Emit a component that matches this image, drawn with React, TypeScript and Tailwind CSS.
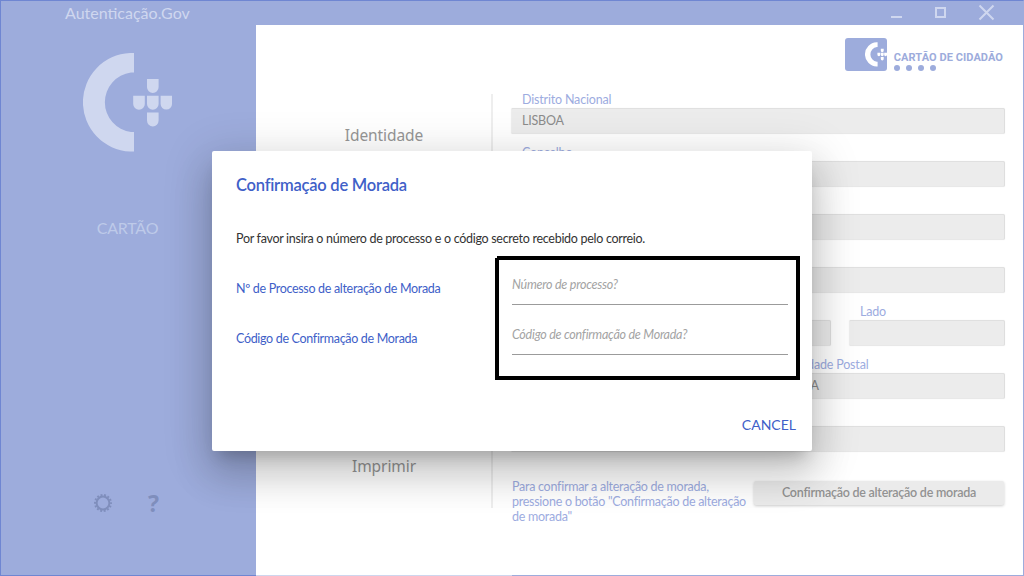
import type { ReactNode } from "react";

function CardMark({ className }: { className?: string }) {
  return (
    <svg viewBox="0 0 89 99" className={className} fill="currentColor" aria-hidden="true">
      <path d="M51 0V19.5H48A30 30 0 0 0 48 79H51V98.5H47A49.3 49.3 0 0 1 47 0Z" />
      <path d="M64 26h11.600v8.200a5.800 5.800 0 0 1-11.600 0z" />
      <path d="M50.200 42.700h11.600v8.200a5.800 5.800 0 0 1-11.600 0z" />
      <path d="M64 42.700h11.600v8.200a5.800 5.800 0 0 1-11.600 0z" />
      <path d="M77.600 42.700h11.400v8.200a5.700 5.700 0 0 1-11.400 0z" />
      <path d="M64 59.400h11.600v8.200a5.800 5.800 0 0 1-11.600 0z" />
    </svg>
  );
}

function GearIcon() {
  return (
    <svg viewBox="0 0 18 18" className="size-[18px]" fill="none" stroke="currentColor" aria-hidden="true">
      <circle cx="9" cy="9" r="6.400" strokeWidth="2" />
      <circle cx="9" cy="9" r="8" strokeWidth="2" strokeDasharray="1.900 1.690" strokeDashoffset="0.950" />
    </svg>
  );
}

function TitleBar() {
  return (
    <header className="flex h-6 shrink-0 items-center justify-between bg-[#9dacdc] pr-7 pl-16 text-[#cfd7ef]">
      <span className="text-[16px] leading-6">Autenticação.Gov</span>
      <svg width="106" height="24" viewBox="0 0 106 24" fill="none" stroke="currentColor" aria-hidden="true">
        <path d="M2 16h11" strokeWidth="2" />
        <rect x="47" y="7" width="9" height="9" strokeWidth="2" />
        <path d="M90.500 4.500l14 14M104.500 4.500l-14 14" strokeWidth="2" />
      </svg>
    </header>
  );
}

function Sidebar() {
  return (
    <aside className="flex w-[255px] shrink-0 flex-col items-center bg-[#9dacdc]">
      <CardMark className="mt-7 mr-[2px] h-[99px] w-[89px] text-[#cfd7ef]" />
      <span className="mt-[66px] mr-[2px] text-base leading-5 tracking-[-0.2px] text-[#becae9]">CARTÃO</span>
      <div className="mt-auto mb-[62px] flex w-full items-center gap-[36px] pl-[93px] text-[#7f8ebc]">
        <GearIcon />
        <span className="font-['Noto_Sans',sans-serif] text-[23px] leading-[20px] font-bold">?</span>
      </div>
    </aside>
  );
}

function Field({ label, value, className = "" }: { label: string; value?: string; className?: string }) {
  return (
    <div className={className}>
      <div className="h-[17px] pl-[11px] text-[12.5px] leading-[17px] tracking-[-0.18px] text-[#9dacdf]">{label}</div>
      <div className="h-[26px] rounded-[2px] border border-t-[#e0e0e0] border-r-[#dedede] border-b-[#e8e8e8] border-l-[#eeeeee] bg-[#ececec] pl-[10px] text-[12.5px] leading-6 tracking-[-0.2px] text-[#8b8b8b] shadow-[0_0_1px_rgba(0,0,0,0.1)]">
        {value}
      </div>
    </div>
  );
}

function BrandHeader() {
  return (
    <div className="flex h-[46px] items-start gap-[7px] self-end pt-[13px] pr-5 text-[#9dacdc]">
      <div className="flex h-[33px] w-[42px] justify-end rounded-[3px] bg-[#9dacdc] pt-1 text-white">
        <CardMark className="h-[25px] w-[22px]" />
      </div>
      <div className="pt-[13px] font-[Roboto,sans-serif] text-[11px] leading-[13px] font-bold tracking-[0.07px] whitespace-nowrap">
        CARTÃO DE CIDADÃO
        <div className="mt-px flex gap-[6px]">
          <i className="size-[6px] rounded-full bg-current" />
          <i className="size-[6px] rounded-full bg-current" />
          <i className="size-[6px] rounded-full bg-current" />
          <i className="size-[6px] rounded-full bg-current" />
        </div>
      </div>
    </div>
  );
}

function MenuItem({ children }: { children: ReactNode }) {
  return (
    <span className="text-center font-['Noto_Sans',sans-serif] text-[15.5px] leading-5 tracking-[-0.08px] text-[#969696]">
      {children}
    </span>
  );
}

function AddressForm() {
  return (
    <section className="flex w-[494px] flex-col">
      <div className="flex flex-col gap-[10px]">
        <Field label="Distrito Nacional" value="LISBOA" />
        <Field label="Concelho" />
        <Field label="Freguesia" />
        <Field label="Localidade" />
        <div className="flex justify-between">
          <Field label="Andar" className="w-[320px]" />
          <Field label="Lado" className="w-[156px]" />
        </div>
        <div className="flex justify-between">
          <Field label="Código Postal" className="w-[246px]" />
          <Field label="Localidade Postal" value="LISBOA" className="w-[239px]" />
        </div>
        <Field label="Morada" />
      </div>
      <div className="mt-[27px] flex items-start justify-between">
        <p className="w-[240px] pl-px text-[12.5px] leading-[15px] tracking-[-0.27px] text-[#9dacdf]">
          Para confirmar a alteração de morada,
          <br />
          pressione o botão "Confirmação de alteração
          <br />
          de morada"
        </p>
        <button className="mt-[2px] mr-px h-6 w-[250px] rounded-[2px] bg-[#ebebeb] text-[12.5px] leading-[22px] font-semibold tracking-[-0.25px] text-[#929292] shadow-[0_1px_3px_rgba(0,0,0,0.2)]">
          Confirmação de alteração de morada
        </button>
      </div>
    </section>
  );
}

function DialogField({ label, placeholder }: { label: string; placeholder: string }) {
  return (
    <div className="flex h-[50px] justify-between">
      <label className="pt-[15px] text-[12.5px] leading-4 tracking-[-0.32px] text-[#4060c8]">{label}</label>
      <div className="h-[39px] w-[276px] border-b border-[#9b9b9b] pt-[11px] text-[12.5px] leading-4 tracking-[-0.24px] text-[#a3a3a3] italic">
        {placeholder}
      </div>
    </div>
  );
}

function ConfirmDialog() {
  return (
    <div
      role="dialog"
      className="absolute top-[151px] left-[212px] flex h-[300px] w-[600px] flex-col rounded-[2px] bg-white px-6 shadow-[0_11px_15px_-7px_rgba(0,0,0,0.2),0_24px_38px_3px_rgba(0,0,0,0.14),0_9px_46px_8px_rgba(0,0,0,0.12)]"
    >
      <h1 className="mt-6 text-[16.5px] leading-5 font-semibold tracking-[-0.23px] text-[#4060c8]">Confirmação de Morada</h1>
      <p className="mt-9 text-[12.5px] leading-4 tracking-[-0.29px] text-[#333333]">
        Por favor insira o número de processo e o código secreto recebido pelo correio.
      </p>
      <div className="mt-[19px]">
        <DialogField label="Nº de Processo de alteração de Morada" placeholder="Número de processo?" />
        <DialogField label="Código de Confirmação de Morada" placeholder="Código de confirmação de Morada?" />
      </div>
      <button className="mt-[49px] -mr-2 self-end text-[14px] leading-5 text-[#4060c8]">CANCEL</button>
      <div className="absolute top-[105px] left-[283px] h-[124px] w-[305px] border-4 border-black [clip-path:polygon(2px_0,100%_0,100%_100%,0_100%,0_2px,2px_2px)]" />
    </div>
  );
}

export default function App() {
  return (
    <div className="relative flex h-[576px] w-[1024px] flex-col overflow-hidden border border-t-[#6f86d2] border-r-[#9dacdc] border-b-0 border-l-[#6f86d2] bg-white font-[Lato,sans-serif]">
      <TitleBar />
      <div className="flex min-h-0 flex-1">
        <Sidebar />
        <main className="flex min-w-0 flex-1 flex-col">
          <BrandHeader />
          <div className="flex flex-1 pt-[20px]">
            <nav className="mt-[3px] flex h-[414px] w-[237px] flex-col justify-between border-r-2 border-[#eeeeee] pt-[31px] pb-8 pl-[21px]">
              <MenuItem>Identidade</MenuItem>
              <MenuItem>Imprimir</MenuItem>
            </nav>
            <div className="ml-[18px]">
              <AddressForm />
            </div>
          </div>
        </main>
      </div>
      <div className="flex h-px shrink-0">
        <div className="w-[255px] bg-[#6f86d2]" />
        <div className="w-[256px] bg-[#ced6ee]" />
        <div className="flex-1 bg-[#9dacdc]" />
      </div>
      <div className="absolute inset-0 -mt-px -ml-px">
        <ConfirmDialog />
      </div>
    </div>
  );
}
